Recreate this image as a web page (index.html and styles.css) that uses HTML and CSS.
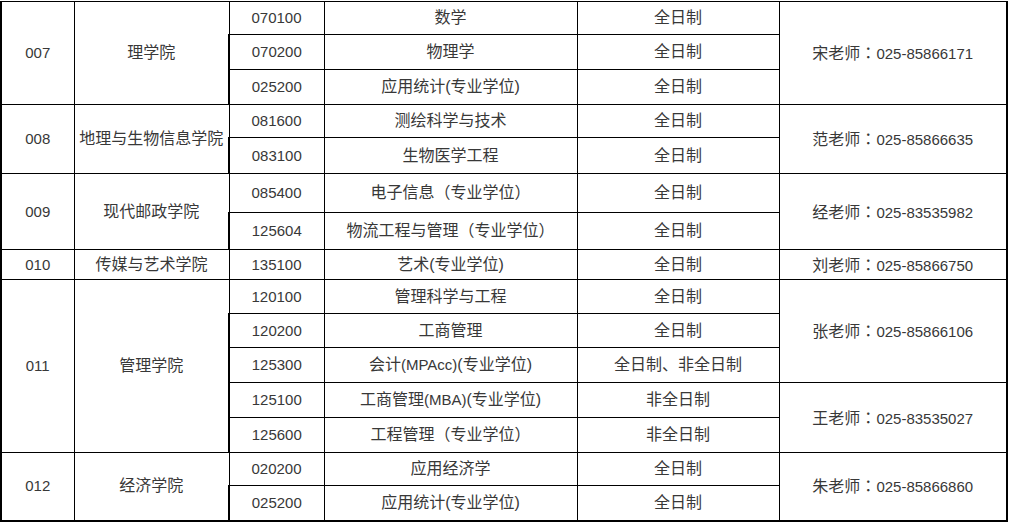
FILE: index.html
```html
<!DOCTYPE html>
<html lang="zh-CN">
<head>
<meta charset="utf-8">
<title>招生专业表</title>
<link rel="stylesheet" href="styles.css">
</head>
<body>
<table class="grid">
  <colgroup>
    <col class="c1"><col class="c2"><col class="c3"><col class="c4"><col class="c5"><col class="c6">
  </colgroup>
  <tbody>
    <tr class="h33"><td rowspan="3" class="num">007</td><td rowspan="3">理学院</td><td class="num">070100</td><td>数学</td><td>全日制</td><td rowspan="3">宋老师<span class="colon" lang="zh-TW">：</span><span class="num">025-85866171</span></td></tr>
    <tr class="h35"><td class="num">070200</td><td>物理学</td><td>全日制</td></tr>
    <tr class="h35"><td class="num">025200</td><td>应用统计(专业学位)</td><td>全日制</td></tr>
    <tr class="h33"><td rowspan="2" class="num">008</td><td rowspan="2">地理与生物信息学院</td><td class="num">081600</td><td>测绘科学与技术</td><td>全日制</td><td rowspan="2">范老师<span class="colon" lang="zh-TW">：</span><span class="num">025-85866635</span></td></tr>
    <tr class="h36"><td class="num">083100</td><td>生物医学工程</td><td>全日制</td></tr>
    <tr class="h39"><td rowspan="2" class="num">009</td><td rowspan="2">现代邮政学院</td><td class="num">085400</td><td>电子信息（专业学位）</td><td>全日制</td><td rowspan="2">经老师<span class="colon" lang="zh-TW">：</span><span class="num">025-83535982</span></td></tr>
    <tr class="h37"><td class="num">125604</td><td>物流工程与管理（专业学位）</td><td>全日制</td></tr>
    <tr class="h30"><td class="num">010</td><td>传媒与艺术学院</td><td class="num">135100</td><td>艺术(专业学位)</td><td>全日制</td><td>刘老师<span class="colon" lang="zh-TW">：</span><span class="num">025-85866750</span></td></tr>
    <tr class="h34"><td rowspan="5" class="num">011</td><td rowspan="5">管理学院</td><td class="num">120100</td><td>管理科学与工程</td><td>全日制</td><td rowspan="3">张老师<span class="colon" lang="zh-TW">：</span><span class="num">025-85866106</span></td></tr>
    <tr class="h34"><td class="num">120200</td><td>工商管理</td><td>全日制</td></tr>
    <tr class="h35"><td class="num">125300</td><td>会计<span class="num">(MPAcc)</span>(专业学位)</td><td>全日制、非全日制</td></tr>
    <tr class="h35"><td class="num">125100</td><td>工商管理<span class="num">(MBA)</span>(专业学位)</td><td>非全日制</td><td rowspan="2">王老师<span class="colon" lang="zh-TW">：</span><span class="num">025-83535027</span></td></tr>
    <tr class="h35"><td class="num">125600</td><td>工程管理（专业学位）</td><td>非全日制</td></tr>
    <tr class="h33"><td rowspan="2" class="num">012</td><td rowspan="2">经济学院</td><td class="num">020200</td><td>应用经济学</td><td>全日制</td><td rowspan="2">朱老师<span class="colon" lang="zh-TW">：</span><span class="num">025-85866860</span></td></tr>
    <tr class="h35"><td class="num">025200</td><td>应用统计(专业学位)</td><td>全日制</td></tr>
  </tbody>
</table>
</body>
</html>
```
FILE: styles.css
```css
html, body {
  margin: 0;
  padding: 0;
  background: #ffffff;
}
body {
  padding-top: 1px;
}
.grid {
  border-collapse: collapse;
  table-layout: fixed;
  width: 1006px;
  font-family: "Liberation Sans", "Noto Sans CJK SC", sans-serif;
  font-size: 16px;
  color: #383838;
  border-left: 2px solid #000;
  border-right: 2px solid #000;
  border-bottom: 2px solid #000;
}
.grid td {
  border: 1px solid #000;
  text-align: center;
  vertical-align: middle;
  padding: 0;
  white-space: nowrap;
  line-height: 20px;
}
.grid tr > td:first-child {
  border-left: 2px solid #000;
}
.grid tr > td:last-child[rowspan] {
  border-right: 2px solid #000;
}
.num {
  font-family: "Liberation Sans", sans-serif;
  font-size: 15px;
}
.colon {
  font-family: "Noto Sans CJK TC", "Noto Sans CJK SC", sans-serif;
}
.c1 { width: 73px; }
.c2 { width: 155px; }
.c3 { width: 95px; }
.c4 { width: 253px; }
.c5 { width: 202px; }
.c6 { width: 228px; }
.h30 { height: 30px; }
.h33 { height: 33px; }
.h34 { height: 34px; }
.h35 { height: 35px; }
.h36 { height: 36px; }
.h37 { height: 37px; }
.h39 { height: 39px; }
```
